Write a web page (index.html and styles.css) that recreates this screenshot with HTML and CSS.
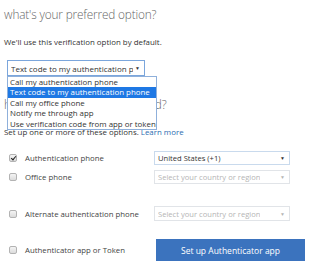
FILE: index.html
```html
<!DOCTYPE html>
<html lang="en">
<head>
  <meta charset="UTF-8">
  <title>Additional security verification</title>
  <link rel="stylesheet" href="styles.css">
</head>
<body>

<div class="page">
  <h2 class="title">what's your preferred option?</h2>
  <p class="note">We'll use this verification option by default.</p>

  <!-- open dropdown -->
  <div class="picker">
    <div class="select open">
      <span class="value">Text code to my authentication phone</span>
      <span class="caret">&#9660;</span>
    </div>
    <ul class="menu">
      <li>Call my authentication phone</li>
      <li class="selected">Text code to my authentication phone</li>
      <li>Call my office phone</li>
      <li>Notify me through app</li>
      <li>Use verification code from app or token</li>
    </ul>
  </div>

  <h2 class="title second">how would you like to respond?</h2>
  <p class="note">Set up one or more of these options. <a href="#">Learn more</a></p>

  <div class="methods">
    <div class="method first">
      <label class="check"><span class="box checked"></span>Authentication phone</label>
      <div class="select">
        <span class="value">United States (+1)</span>
        <span class="caret">&#9660;</span>
      </div>
    </div>
    <div class="method second">
      <label class="check"><span class="box"></span>Office phone</label>
      <div class="select empty">
        <span class="value">Select your country or region</span>
        <span class="caret">&#9660;</span>
      </div>
    </div>
    <div class="method third">
      <label class="check"><span class="box"></span>Alternate authentication phone</label>
      <div class="select empty">
        <span class="value">Select your country or region</span>
        <span class="caret">&#9660;</span>
      </div>
    </div>
    <div class="method fourth">
      <label class="check"><span class="box"></span>Authenticator app or Token</label>
      <button class="setup-btn">Set up Authenticator app</button>
    </div>
  </div>
</div>

</body>
</html>
```

FILE: styles.css
```css
body {
  margin: 0;
  padding: 0;
  background: #fff;
  font-family: 'Open Sans', 'Noto Sans', sans-serif;
  color: #444;
}

.page {
  padding: 4px 0 0 4px;
}

.title {
  margin: 0;
  font-size: 11.8px;
  font-weight: 300;
  letter-spacing: -0.15px;
  color: #666;
  line-height: 20px;
}

.title.second {
  margin-top: 18px;
}

.note {
  margin: 13px 0 0;
  font-size: 7.9px;
  line-height: 10px;
  color: #333;
}

.note a {
  color: #2b6cb0;
  text-decoration: none;
}

.picker {
  position: relative;
  margin: 13px 0 0 3px;
  width: 138px;
}

.select {
  display: flex;
  align-items: center;
  justify-content: space-between;
  box-sizing: border-box;
  height: 14px;
  padding: 0 4px 0 3px;
  border: 1px solid #c9daed;
  background: #fff;
  font-size: 7.6px;
  color: #333;
  white-space: nowrap;
  overflow: hidden;
}

.select .value {
  overflow: hidden;
}

.select .caret {
  font-size: 5px;
  color: #333;
  margin-left: 4px;
}

.select.open {
  height: 16px;
  font-size: 8px;
  border-color: #7ba6dc;
}

.select.open .caret {
  margin-left: 2px;
}

.select.empty {
  border-color: #e1e4e8;
  color: #b5b5b5;
}

.select.empty .caret {
  color: #b5b5b5;
}

.menu {
  position: absolute;
  top: 16px;
  left: 0;
  width: 148px;
  margin: 0;
  padding: 0;
  list-style: none;
  background: #fff;
  border: 1px solid #8fb0db;
  z-index: 2;
}

.menu li {
  height: 10.4px;
  line-height: 10.4px;
  padding: 0 2px;
  font-size: 7.9px;
  color: #333;
  white-space: nowrap;
}

.menu li.selected {
  background: #1e78e4;
  color: #fff;
}

.methods {
  margin-top: 14px;
}

.method {
  display: flex;
  align-items: center;
}

.method.second {
  margin-top: 5px;
}

.method.third {
  margin-top: 22px;
}

.method.fourth {
  margin-top: 18px;
}

.check {
  display: flex;
  align-items: center;
  width: 150px;
  font-size: 7.8px;
  color: #444;
}

.box {
  position: relative;
  box-sizing: border-box;
  width: 8px;
  height: 8px;
  margin: 0 8px 0 5px;
  border: 1px solid #b3b3b3;
  border-radius: 2px;
  background: linear-gradient(#f4f4f4, #dcdcdc);
}

.box.checked::after {
  content: '';
  position: absolute;
  left: 1.5px;
  top: 0;
  width: 2px;
  height: 4px;
  border: solid #222;
  border-width: 0 1.5px 1.5px 0;
  transform: rotate(40deg);
}

.method .select {
  width: 136px;
}

.method.third .select {
  height: 15px;
}

.setup-btn {
  box-sizing: border-box;
  width: 149px;
  height: 22px;
  margin-left: 2px;
  border: none;
  background: #3b73be;
  color: #fff;
  font-family: inherit;
  font-size: 8.5px;
}
```
